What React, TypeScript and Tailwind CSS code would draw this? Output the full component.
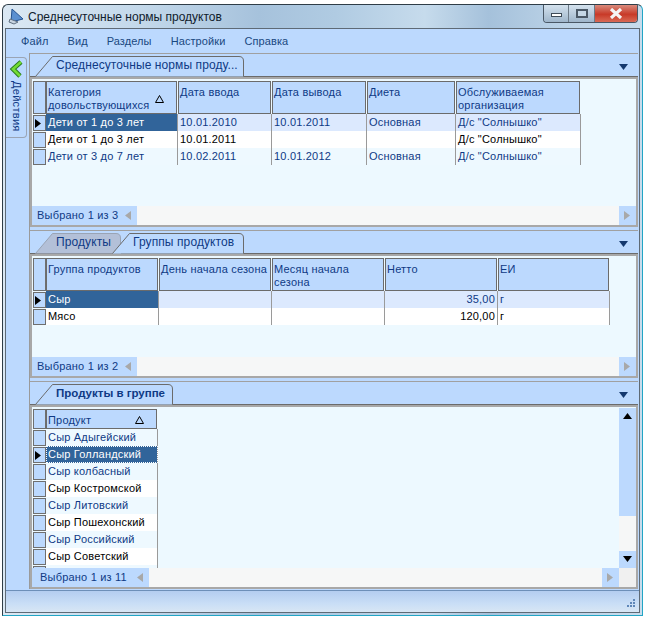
const BLUE = 'text-[#0f3a85]';

type Col = { w: number; title: string; sort?: boolean };
type Row = { sel?: boolean; tone: 'cur' | 'white' | 'alt'; cells: string[] };

function Tri({ dir, className }: { dir: 'r' | 'l' | 'u' | 'd'; className: string }) {
  const pts = { r: '1,0 7,4.5 1,9', l: '7,0 1,4.5 7,9', u: '0,7 4.5,1 9,7', d: '0,1 4.5,7 9,1' }[dir];
  return (
    <svg width="9" height="9" viewBox="0 0 9 9" className={className}>
      <polygon points={pts} fill="currentColor" />
    </svg>
  );
}

function Tab({ label, active = true, bold = false, width }: { label: string; active?: boolean; bold?: boolean; width: number }) {
  return (
    <div className="relative z-10 -mb-px h-[21px] shrink-0" style={{ width }}>
      <svg width={width} height="21" className="absolute inset-0">
        <path
          d={`M0.5 20.5 L17.5 0.5 L${width - 5} 0.5 Q${width - 0.5} 0.5 ${width - 0.5} 5 L${width - 0.5} 20.5`}
          fill={active ? '#bcd9fe' : '#b3c0d8'}
          stroke={active ? '#6b6b6b' : '#9aa4b4'}
        />
      </svg>
      <span
        className={`absolute left-[21px] top-[2px] whitespace-nowrap leading-[15px] ${bold ? 'text-[11.5px] font-bold' : 'text-[12px] tracking-[0.1px]'} ${BLUE}`}
      >
        {label}
      </span>
    </div>
  );
}

function Strip({ children }: { children: React.ReactNode }) {
  return (
    <div className="flex h-[23px] items-end border-b border-[#6b6b6b] bg-[#bcd9fe] pl-[5px]">
      {children}
      <div className="mb-[4px] ml-auto mr-[10px] flex">
        <Tri dir="d" className="text-[#14386e]" />
      </div>
    </div>
  );
}

function Selector({ current, header }: { current?: boolean; header?: boolean }) {
  return (
    <div
      className={`flex w-[13px] shrink-0 items-center border border-[#6f6f6f] bg-[#bcd9fe] ${header ? 'h-full' : 'h-[16px]'}`}
    >
      {current && <Tri dir="r" className="text-black" />}
    </div>
  );
}

function SortMark() {
  return (
    <svg width="9" height="8" viewBox="0 0 9 8" className="absolute right-[14px] top-1/2 mt-[-3px] text-black">
      <polygon points="4.5,0.5 8.5,7.5 0.5,7.5" fill="none" stroke="currentColor" />
    </svg>
  );
}

function Grid({ cols, rows, headerH, focus }: { cols: Col[]; rows: Row[]; headerH: number; focus?: boolean }) {
  return (
    <div className="flex flex-col">
      <div className="flex pl-px" style={{ height: headerH }}>
        <Selector header />
        {cols.map((c) => (
          <div key={c.title} className="relative shrink-0 pr-px" style={{ width: c.w }}>
            <div className={`h-full border border-[#6b6b6b] bg-[#bcd9fe] px-[1px] pt-[4px] text-[11px] leading-[13px] tracking-[0.2px] ${BLUE}`}>
              {c.title}
              {c.sort && <SortMark />}
            </div>
          </div>
        ))}
      </div>
      {rows.map((r, i) => (
        <div key={i} className="flex h-[17px] pl-px">
          <div className="pt-px">
            <Selector current={r.sel} />
          </div>
          <div className={`flex ${r.tone === 'cur' ? 'bg-[#dce9fe]' : r.tone === 'white' ? 'bg-white' : 'bg-[#eef9ff]'}`}>
            {cols.map((c, j) => {
              const selected = r.sel && j === 0;
              const ink = selected ? 'bg-[#31649a] text-white' : r.tone === 'white' ? 'text-black' : BLUE;
              const isNum = c.title === 'Нетто';
              return (
                <div
                  key={c.title}
                  className={`h-[17px] shrink-0 overflow-hidden whitespace-nowrap border-r border-[#9a9a9a] px-[2px] text-[11px] leading-[17px] tracking-[0.2px] ${ink} ${isNum ? 'text-right' : ''} ${selected && focus ? 'outline-1 -outline-offset-1 outline-dotted outline-white' : ''}`}
                  style={{ width: c.w }}
                >
                  {r.cells[j]}
                </div>
              );
            })}
          </div>
        </div>
      ))}
    </div>
  );
}

function Footer({ text, labelW, pad = 'pl-[5px]' }: { text: string; labelW: number; pad?: string }) {
  return (
    <div className="mt-auto flex h-[19px] shrink-0">
      <div className="flex items-center bg-[#bcd9fe]" style={{ width: labelW }}>
        <span className={`${pad} text-[11px] tracking-[0.2px] ${BLUE}`}>{text}</span>
        <Tri dir="l" className="ml-auto mr-[4px] text-[#a8a8a8]" />
      </div>
      <div className="flex-1 bg-[#f6f7f7]" />
      <div className="flex w-[17px] items-center justify-center bg-[#bcd9fe]">
        <Tri dir="r" className="text-[#a8a8a8]" />
      </div>
    </div>
  );
}

const G1: Col[] = [
  { w: 132, title: 'Категория довольствующихся', sort: true },
  { w: 94, title: 'Дата ввода' },
  { w: 95, title: 'Дата вывода' },
  { w: 89, title: 'Диета' },
  { w: 125, title: 'Обслуживаемая организация' },
];
const R1: Row[] = [
  { sel: true, tone: 'cur', cells: ['Дети от 1 до 3 лет', '10.01.2010', '10.01.2011', 'Основная', 'Д/с "Солнышко"'] },
  { tone: 'white', cells: ['Дети от 1 до 3 лет', '10.01.2011', '', '', 'Д/с "Солнышко"'] },
  { tone: 'alt', cells: ['Дети от 3 до 7 лет', '10.02.2011', '10.01.2012', 'Основная', 'Д/с "Солнышко"'] },
];
const G2: Col[] = [
  { w: 113, title: 'Группа продуктов' },
  { w: 113, title: 'День начала сезона' },
  { w: 113, title: 'Месяц начала сезона' },
  { w: 113, title: 'Нетто' },
  { w: 112, title: 'ЕИ' },
];
const R2: Row[] = [
  { sel: true, tone: 'cur', cells: ['Сыр', '', '', '35,00', 'г'] },
  { tone: 'white', cells: ['Мясо', '', '', '120,00', 'г'] },
];
const G3: Col[] = [{ w: 112, title: 'Продукт', sort: true }];
const R3: Row[] = [
  { tone: 'alt', cells: ['Сыр Адыгейский'] },
  { sel: true, tone: 'alt', cells: ['Сыр Голландский'] },
  { tone: 'alt', cells: ['Сыр колбасный'] },
  { tone: 'white', cells: ['Сыр Костромской'] },
  { tone: 'alt', cells: ['Сыр Литовский'] },
  { tone: 'white', cells: ['Сыр Пошехонский'] },
  { tone: 'alt', cells: ['Сыр Российский'] },
  { tone: 'white', cells: ['Сыр Советский'] },
  { tone: 'alt', cells: [''] },
];

function Body({ children, h }: { children: React.ReactNode; h: number }) {
  return (
    <div className="flex flex-col overflow-hidden border-2 border-[#a8a8a8] bg-[#edf9ff] pt-px" style={{ height: h }}>
      {children}
    </div>
  );
}

export default function App() {
  return (
    <div className="h-[619px] w-[647px] bg-white pl-[2px] pt-[4px] font-['Liberation_Sans',sans-serif]">
      <div className="flex h-[612px] w-[641px] flex-col overflow-hidden rounded-t-[6px] border border-[#2f3d47] border-b-[#22a5c5] border-r-[#22a5c5] bg-[linear-gradient(90deg,#dbe8f3_0%,#c3d8ea_22%,#a6c2dc_40%,#b0cbe2_52%,#c6dbec_66%,#a5c1db_76%,#bcd3e7_88%,#c8dcec_100%)] px-[2px] pb-[2px]">
        <div className="relative flex h-[23px] shrink-0 items-center">
          <svg width="17" height="17" viewBox="0 0 17 17" className="ml-[3px]">
            <path d="M4 1 L15 11 L3 14 Z" fill="#5a8fd0" stroke="#24528f" />
            <path d="M2 11 L10 14 L6 16 L1 14 Z" fill="#c8d4e0" stroke="#5f6f80" />
          </svg>
          <span className="ml-[3px] text-[12px] text-[#10202c]">Среднесуточные нормы продуктов</span>
          <div className="absolute right-[2px] top-0 flex h-[18px] overflow-hidden rounded-b-[4px] border border-t-0 border-[#4a5866]">
            <div className="flex w-[25px] items-center justify-center border-r border-[#6c7a88] bg-[linear-gradient(#d4e2ee,#9fb6cb)]">
              <div className="mt-[3px] h-[4px] w-[11px] border border-[#3f4c58] bg-white" />
            </div>
            <div className="flex w-[26px] items-center justify-center border-r border-[#6c7a88] bg-[linear-gradient(#d4e2ee,#9fb6cb)]">
              <div className="h-[9px] w-[12px] border-2 border-[#4a5866] bg-[#c5d7e6]" />
            </div>
            <div className="flex w-[42px] items-center justify-center bg-[linear-gradient(#d98a7c,#c83a28_55%,#d96a55)]">
              <svg width="14" height="11" viewBox="0 0 14 11">
                <path d="M2 1 L12 10 M12 1 L2 10" stroke="#f4f4f4" strokeWidth="3.2" />
              </svg>
            </div>
          </div>
        </div>

        <div className="flex min-h-0 flex-1 flex-col border border-[#5e6a76] bg-[#bcd9fe]">
          <div className="flex h-[24px] shrink-0 items-center gap-[19px] pl-[15px] text-[11px] tracking-[0.1px] text-[#1a4880]">
            <span>Файл</span>
            <span>Вид</span>
            <span>Разделы</span>
            <span>Настройки</span>
            <span>Справка</span>
          </div>

          <div className="flex min-h-0 flex-1">
            <div className="w-[23px] shrink-0">
              <div className="ml-0 mt-[4px] flex h-[81px] w-[21px] flex-col items-center rounded-r-[4px] border border-l-0 border-[#9aa4b4]">
                <svg width="15" height="18" viewBox="0 0 15 18" className="mt-[2px]">
                  <path d="M12 2 L4 9 L11 16" fill="none" stroke="#2c7a22" strokeWidth="4.6" />
                  <path d="M12 2 L4 9 L11 16" fill="none" stroke="#72dc34" strokeWidth="2.6" />
                </svg>
                <span className={`mt-[3px] text-[11px] leading-[15px] tracking-[0.3px] [writing-mode:vertical-rl] ${BLUE}`}>Действия</span>
              </div>
            </div>

            <div className="flex min-w-0 flex-1 flex-col border-l border-[#9a9a9a] pr-px">
              <div className="border-t border-[#a0a0a0]">
                <Strip>
                  <Tab label="Среднесуточные нормы проду..." width={209} />
                </Strip>
                <Body h={150}>
                  <div className="pt-[1px]">
                    <Grid cols={G1} rows={R1} headerH={33} />
                  </div>
                  <Footer text="Выбрано 1 из 3" labelW={105} />
                </Body>
              </div>

              <div className="mt-[3px] border-t border-[#a0a0a0]">
                <Strip>
                  <div className="relative z-10 flex">
                    <Tab label="Продукты" active={false} width={86} />
                    <div className="-ml-[9px]">
                      <Tab label="Группы продуктов" width={132} />
                    </div>
                  </div>
                </Strip>
                <Body h={124}>
                  <div className="pt-px">
                    <Grid cols={G2} rows={R2} headerH={33} />
                  </div>
                  <Footer text="Выбрано 1 из 2" labelW={105} />
                </Body>
              </div>

              <div className="mt-[3px] border-t border-[#a0a0a0]">
                <Strip>
                  <Tab label="Продукты в группе" bold width={138} />
                </Strip>
                <Body h={184}>
                  <div className="flex min-h-0 flex-1">
                    <div className="min-w-0 flex-1 overflow-hidden pt-px">
                      <Grid cols={G3} rows={R3} headerH={20} focus />
                    </div>
                    <div className="flex w-[17px] shrink-0 flex-col bg-[#bcd9fe]">
                      <div className="flex h-[17px] items-center justify-center">
                        <Tri dir="u" className="text-black" />
                      </div>
                      <div className="flex-1" />
                      <div className="h-[35px] bg-[#f6f7f7]" />
                      <div className="flex h-[17px] items-center justify-center">
                        <Tri dir="d" className="text-black" />
                      </div>
                    </div>
                  </div>
                  <div className="flex">
                    <div className="min-w-0 flex-1">
                      <Footer text="Выбрано 1 из 11" labelW={117} pad="pl-[8px]" />
                    </div>
                    <div className="h-[19px] w-[17px] bg-[#f0f0f0]" />
                  </div>
                </Body>
              </div>
            </div>
          </div>

          <div className="mt-[1px] flex h-[22px] shrink-0 items-end justify-end border-t border-[#6d8fb8] bg-[linear-gradient(#b4cdf0,#c9def6_60%,#d8e6f4)] pb-[2px] pr-[3px]">
            <svg width="12" height="12" viewBox="0 0 12 12">
              <g fill="#5e86b8">
                <rect x="9" y="1" width="2" height="2" />
                <rect x="6" y="4" width="2" height="2" />
                <rect x="9" y="4" width="2" height="2" />
                <rect x="3" y="7" width="2" height="2" />
                <rect x="6" y="7" width="2" height="2" />
                <rect x="9" y="7" width="2" height="2" />
              </g>
            </svg>
          </div>
        </div>
      </div>
    </div>
  );
}
